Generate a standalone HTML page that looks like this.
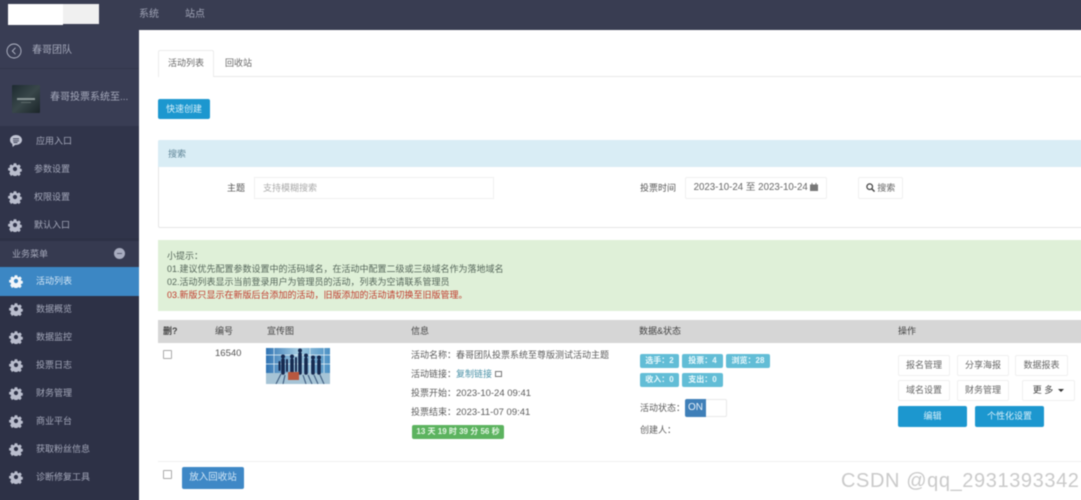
<!DOCTYPE html>
<html lang="zh"><head><meta charset="utf-8"><title>活动列表</title>
<style>
html,body{margin:0;padding:0;background:#fff}
#p{position:relative;width:1081px;height:500px;overflow:hidden;background:#fff}
#q{position:absolute;left:-10px;top:-10px;width:1111px;height:530px;background:#fff;filter:blur(.4px)}
#r{position:absolute;left:10px;top:10px;width:1081px;height:500px;font-family:"Liberation Sans","Noto Sans CJK SC",sans-serif;font-size:9px;color:#5c5c5c}
.a{position:absolute;white-space:nowrap}
.t{position:absolute;white-space:nowrap;height:14px;line-height:14px}
.s{color:#a4a8ba}
.btn{position:absolute;box-sizing:border-box;border:1px solid #f0f0f0;background:#fff;border-radius:2px;text-align:center;color:#666;white-space:nowrap}
.blue{position:absolute;background:#1c97cf;color:#d8f0fa;border-radius:2px;text-align:center;white-space:nowrap}
.lb{position:absolute;height:14px;line-height:14px;background:#62bdd6;color:#e8f8fc;border-radius:2px;text-align:center;font-size:8px;font-weight:bold;white-space:nowrap}
svg.g{position:absolute;width:14px;height:14px}
</style></head><body><div id="p"><div id="q"><div id="r">
<svg width="0" height="0" style="position:absolute"><defs><symbol id="gear" viewBox="0 0 24 24"><path fill="#b9bdcd" fill-rule="evenodd" d="M9.600 1h4.800l.7 3.200 1.900.8 2.800-1.800 3.200 3.600-1.800 2.700.7 1.900 3 .7v4.600l-3 .7-.8 1.900 1.800 2.700-3.300 3.400-2.700-1.800-1.900.8-.6 3h-4.800l-.7-3-1.900-.8-2.700 1.800L.9 20l1.800-2.700-.8-1.900-3-.7v-4.600l3-.7.8-1.900L.9 6.800l3.300-3.600L7 5l1.900-.8zM12 8a4 4 0 100 8 4 4 0 000-8z" transform="translate(1.200 1.200) scale(.9)"/></symbol><symbol id="gearw" viewBox="0 0 24 24"><path fill="#f2f6fa" fill-rule="evenodd" d="M9.600 1h4.800l.7 3.200 1.900.8 2.800-1.800 3.200 3.600-1.800 2.700.7 1.900 3 .7v4.600l-3 .7-.8 1.900 1.800 2.700-3.300 3.400-2.700-1.800-1.900.8-.6 3h-4.800l-.7-3-1.900-.8-2.700 1.800L.9 20l1.800-2.700-.8-1.900-3-.7v-4.600l3-.7.8-1.900L.9 6.800l3.300-3.600L7 5l1.900-.8zM12 8a4 4 0 100 8 4 4 0 000-8z" transform="translate(1.200 1.200) scale(.9)"/></symbol></defs></svg>

<!-- top bar -->
<div class="a" style="left:-10px;top:-10px;width:1111px;height:40px;background:#393d52"></div>
<div class="a" style="left:8px;top:4px;width:55px;height:21px;background:#fff"></div>
<div class="a" style="left:63px;top:4px;width:36px;height:20px;background:#f0f0f0"></div>
<div class="t" style="left:139px;top:8px;font-size:10px;color:#9ea2b4">系统</div>
<div class="t" style="left:185px;top:8px;font-size:10px;color:#9ea2b4">站点</div>

<!-- sidebar -->
<div class="a" style="left:-10px;top:30px;width:149px;height:490px;background:#2d3146"></div>
<div class="a" style="left:-10px;top:30px;width:149px;height:96px;background:#393d54"></div>
<div class="a" style="left:-10px;top:68px;width:149px;height:1px;background:#33374c"></div>
<div class="a" style="left:-10px;top:126px;width:149px;height:112px;background:#30344a"></div>
<div class="a" style="left:-10px;top:241px;width:149px;height:26px;background:#363a50"></div>
<div class="a" style="left:-10px;top:267px;width:149px;height:29px;background:#3c87c4"></div>

<svg class="a" style="left:6px;top:43px" width="16" height="16" viewBox="0 0 16 16"><circle cx="8" cy="8" r="7" fill="none" stroke="#b4b8c8" stroke-width=".9"/><path d="M9.500 4.800 6.300 8l3.200 3.200" fill="none" stroke="#b4b8c8" stroke-width=".9"/></svg>
<div class="t s" style="left:32px;top:44px;font-size:10px">春哥团队</div>

<svg class="a" style="left:12px;top:85px" width="28" height="28" viewBox="0 0 28 28"><defs><linearGradient id="lg" x1="0" y1="0" x2="1" y2="1"><stop offset="0" stop-color="#1d2a30"/><stop offset=".5" stop-color="#39474a"/><stop offset="1" stop-color="#1a2428"/></linearGradient></defs><rect width="28" height="28" rx="1" fill="url(#lg)"/><rect x="5" y="13" width="18" height="2" fill="#8a9696"/><rect x="9" y="17" width="10" height="1" fill="#5b6868"/></svg>
<div class="t s" style="left:50px;top:91px;font-size:10px">春哥投票系统至...</div>

<svg class="a" style="left:9px;top:134px" width="14" height="14" viewBox="0 0 14 14"><path d="M7 1C3.500 1 1 3.200 1 6c0 1.600.8 3 2.200 3.900L3.600 13l2.600-2.100H7c3.400 0 6-2.200 6-4.900S10.500 1 7 1z" fill="#bfc3d2"/><path d="M4 4.800h6M4 6.800h6M4.500 8.600h4" stroke="#30344a" stroke-width=".9"/></svg>
<div class="t s" style="left:36px;top:134px">应用入口</div>
<svg class="g" style="left:8px;top:162px"><use href="#gear"/></svg><div class="t s" style="left:34px;top:162px">参数设置</div>
<svg class="g" style="left:8px;top:190px"><use href="#gear"/></svg><div class="t s" style="left:34px;top:190px">权限设置</div>
<svg class="g" style="left:8px;top:218px"><use href="#gear"/></svg><div class="t s" style="left:34px;top:218px">默认入口</div>

<div class="t s" style="left:12px;top:247px">业务菜单</div>
<div class="a" style="left:114px;top:248px;width:11px;height:11px;border-radius:50%;background:#a8acbf"></div>
<div class="a" style="left:117px;top:253px;width:5px;height:1px;background:#5a5e74"></div>

<svg class="g" style="left:9px;top:274px"><use href="#gearw"/></svg><div class="t" style="left:36px;top:274px;color:#d4e6f5">活动列表</div>
<svg class="g" style="left:9px;top:302px"><use href="#gear"/></svg><div class="t s" style="left:36px;top:302px">数据概览</div>
<svg class="g" style="left:9px;top:330px"><use href="#gear"/></svg><div class="t s" style="left:36px;top:330px">数据监控</div>
<svg class="g" style="left:9px;top:358px"><use href="#gear"/></svg><div class="t s" style="left:36px;top:358px">投票日志</div>
<svg class="g" style="left:9px;top:386px"><use href="#gear"/></svg><div class="t s" style="left:36px;top:386px">财务管理</div>
<svg class="g" style="left:9px;top:414px"><use href="#gear"/></svg><div class="t s" style="left:36px;top:414px">商业平台</div>
<svg class="g" style="left:9px;top:442px"><use href="#gear"/></svg><div class="t s" style="left:36px;top:442px">获取粉丝信息</div>
<svg class="g" style="left:9px;top:470px"><use href="#gear"/></svg><div class="t s" style="left:36px;top:470px">诊断修复工具</div>

<!-- tabs -->
<div class="a" style="left:214px;top:76px;width:887px;height:1px;background:#e8e8e8"></div>
<div class="a" style="left:158px;top:50px;width:56px;height:27px;box-sizing:border-box;border:1px solid #ececec;border-bottom:0;background:#fff;border-radius:2px 2px 0 0"></div>
<div class="t" style="left:168px;top:56px;color:#666">活动列表</div>
<div class="t" style="left:225px;top:56px;color:#666">回收站</div>

<div class="blue" style="left:158px;top:99px;width:52px;height:20px;line-height:20px">快速创建</div>

<!-- search panel -->
<div class="a" style="left:158px;top:140px;width:960px;height:88px;box-sizing:border-box;border:1px solid #e6e6e6;border-radius:2px"></div>
<div class="a" style="left:158px;top:140px;width:943px;height:27px;background:#d9edf5;border-radius:2px 0 0 0"></div>
<div class="t" style="left:168px;top:147px;color:#5f8598">搜索</div>
<div class="t" style="left:227px;top:181px;color:#555">主题</div>
<div class="btn" style="left:254px;top:177px;width:240px;height:22px;line-height:20px;text-align:left;padding-left:8px;color:#aaa;border-radius:0">支持模糊搜索</div>
<div class="t" style="left:640px;top:181px;color:#555">投票时间</div>
<div class="btn" style="left:685px;top:177px;width:142px;height:22px;line-height:20px;font-size:9.700px;color:#666">2023-10-24 至 2023-10-24 <svg width="8" height="8" viewBox="0 0 8 8" style="vertical-align:-1px"><path d="M0 1.500h8V8H0zM1.500 0h1v2h-1zM5.500 0h1v2h-1z" fill="#777"/></svg></div>
<div class="btn" style="left:858px;top:177px;width:45px;height:22px;line-height:20px;color:#666"><svg width="9" height="9" viewBox="0 0 8 8" style="vertical-align:-1px"><circle cx="3.300" cy="3.300" r="2.500" fill="none" stroke="#444" stroke-width="1.100"/><path d="M5.200 5.200 7.600 7.600" stroke="#444" stroke-width="1.300"/></svg> 搜索</div>

<!-- alert -->
<div class="a" style="left:158px;top:240px;width:943px;height:71px;background:#dff0d8"></div>
<div class="t" style="left:167px;top:249px;color:#55665a">小提示&#65306;</div>
<div class="t" style="left:167px;top:262px;color:#55665a">01.建议优先配置参数设置中的活码域名&#65292;在活动中配置二级或三级域名作为落地域名</div>
<div class="t" style="left:167px;top:275px;color:#55665a">02.活动列表显示当前登录用户为管理员的活动&#65292;列表为空请联系管理员</div>
<div class="t" style="left:167px;top:288px;color:#c0392b">03.新版只显示在新版后台添加的活动&#65292;旧版添加的活动请切换至旧版管理。</div>

<!-- table head -->
<div class="a" style="left:158px;top:320px;width:943px;height:23px;background:#d6d6d6"></div>
<div class="t" style="left:163px;top:324px;color:#444;font-weight:bold">删?</div>
<div class="t" style="left:215px;top:324px;color:#444">编号</div>
<div class="t" style="left:267px;top:324px;color:#444">宣传图</div>
<div class="t" style="left:411px;top:324px;color:#444">信息</div>
<div class="t" style="left:639px;top:324px;color:#444">数据&amp;状态</div>
<div class="t" style="left:898px;top:324px;color:#444">操作</div>

<!-- row -->
<div class="a" style="left:163px;top:350px;width:7px;height:7px;border:1px solid #aaa;border-radius:1px;background:#fff"></div>
<div class="t" style="left:215px;top:347px;font-size:9.500px;color:#555">16540</div>

<svg class="a" style="left:266px;top:348px" width="64" height="36" viewBox="0 0 64 36"><defs><linearGradient id="ph" x1="0" y1="0" x2="1" y2="0"><stop offset="0" stop-color="#2f74b4"/><stop offset=".5" stop-color="#a4cce2"/><stop offset="1" stop-color="#4a90c4"/></linearGradient></defs><rect width="64" height="36" fill="url(#ph)"/><rect y="25" width="64" height="11" fill="#a6c4d6"/><path d="M0 7h64M0 16h64M8 0v25M44 0v25M58 0v25" stroke="#e6f1f7" stroke-width=".7"/>
<g fill="#16294f" stroke="#16294f" stroke-linecap="round"><g stroke-width="3.600"><path d="M17 12v13M26 12v13M34 6v19M40 11v14M47 13v12M53 13v12"/></g><g stroke="none"><circle cx="17" cy="8.500" r="2"/><circle cx="26" cy="8.500" r="2"/><circle cx="34" cy="2.500" r="2"/><circle cx="40" cy="7.500" r="2"/><circle cx="47" cy="9.500" r="2"/><circle cx="53" cy="9.500" r="2"/></g><path d="M21 12v11M13.500 14v8M30 10v13" stroke-width="2"/></g>
<rect x="22" y="24" width="11" height="8" fill="#b8583f"/><path d="M10 36l5-10M17 36l2-9M37 27l3 9M42 27l4 9M48 27l4 9M54 27l4 9" stroke="#3f5d80" stroke-width="1.100"/></svg>

<div class="t" style="left:411px;top:348px">活动名称&#65306;春哥团队投票系统至尊版测试活动主题</div>
<div class="t" style="left:411px;top:367px">活动链接&#65306;<span style="color:#4d93a8">复制链接</span> <span style="display:inline-block;width:7px;height:6px;border:1px solid #777;box-sizing:border-box;vertical-align:0"></span></div>
<div class="t" style="left:411px;top:386px">投票开始&#65306;<span style="font-size:9.500px">2023-10-24 09:41</span></div>
<div class="t" style="left:411px;top:405px">投票结束&#65306;<span style="font-size:9.500px">2023-11-07 09:41</span></div>
<div class="a" style="left:412px;top:425px;width:92px;height:14px;line-height:14px;background:#5cb35f;color:#e4f6e4;border-radius:2px;text-align:center;font-size:8px;font-weight:bold">13 天 19 时 39 分 56 秒</div>

<div class="lb" style="left:640px;top:354px;width:39px">选手&#65306;2</div>
<div class="lb" style="left:682px;top:354px;width:41px">投票&#65306;4</div>
<div class="lb" style="left:726px;top:354px;width:44px">浏览&#65306;28</div>
<div class="lb" style="left:640px;top:373px;width:39px">收入&#65306;0</div>
<div class="lb" style="left:682px;top:373px;width:41px">支出&#65306;0</div>
<div class="t" style="left:640px;top:401px">活动状态&#65306;</div>
<div class="a" style="left:685px;top:399px;width:42px;height:18px;box-sizing:border-box;border:1px solid #e8e8e8;border-radius:2px;background:#fff"></div>
<div class="a" style="left:685px;top:399px;width:21px;height:18px;line-height:18px;background:#3f7fb8;color:#e8f2fa;font-size:10px;text-align:center;border-radius:2px 0 0 2px">ON</div>
<div class="t" style="left:640px;top:423px">创建人&#65306;</div>

<div class="btn" style="left:898px;top:355px;width:52px;height:21px;line-height:19px">报名管理</div>
<div class="btn" style="left:957px;top:355px;width:52px;height:21px;line-height:19px">分享海报</div>
<div class="btn" style="left:1015px;top:355px;width:53px;height:21px;line-height:19px">数据报表</div>
<div class="btn" style="left:898px;top:380px;width:52px;height:21px;line-height:19px">域名设置</div>
<div class="btn" style="left:957px;top:380px;width:52px;height:21px;line-height:19px">财务管理</div>
<div class="btn" style="left:1022px;top:380px;width:53px;height:21px;line-height:19px;color:#444">更 多 &nbsp;<span style="display:inline-block;width:0;height:0;border:3px solid transparent;border-top-color:#333;border-bottom:0;vertical-align:1px"></span></div>
<div class="blue" style="left:898px;top:406px;width:69px;height:21px;line-height:21px">编辑</div>
<div class="blue" style="left:975px;top:406px;width:69px;height:21px;line-height:21px">个性化设置</div>

<div class="a" style="left:158px;top:461px;width:943px;height:1px;background:#efefef"></div>
<div class="a" style="left:163px;top:470px;width:7px;height:7px;border:1px solid #aaa;border-radius:1px;background:#fff"></div>
<div class="a" style="left:182px;top:467px;width:62px;height:22px;line-height:22px;background:#3f88c6;color:#d4e8f7;border-radius:2px;text-align:center;font-size:9.500px">放入回收站</div>

<div class="a" style="left:841px;top:468px;height:26px;line-height:26px;font-size:20px;color:#cacaca;letter-spacing:.6px">CSDN @qq_2931393342</div>
</div></div></div></body></html>
